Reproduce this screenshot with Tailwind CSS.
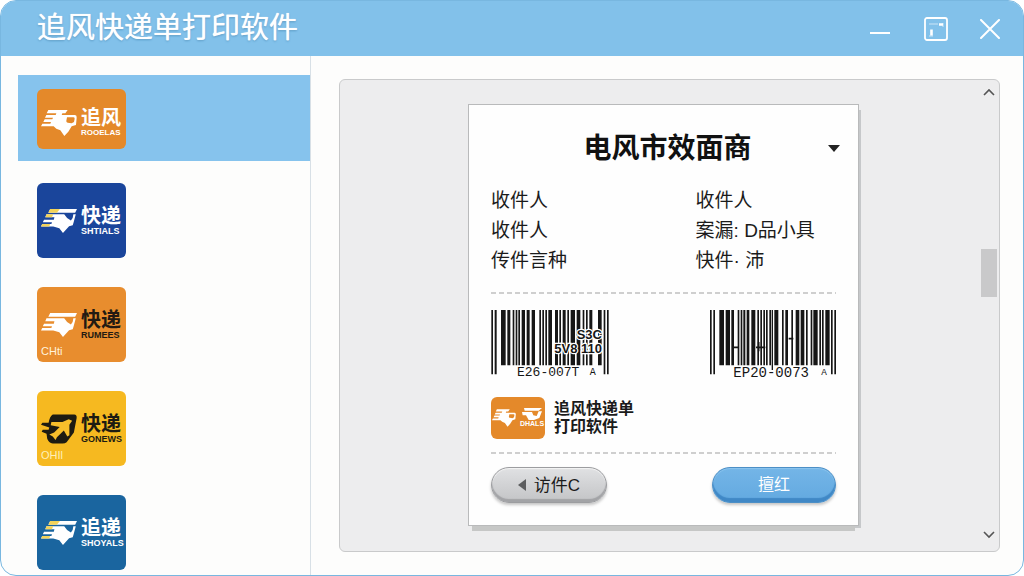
<!DOCTYPE html>
<html lang="zh-CN">
<head>
<meta charset="utf-8">
<meta name="viewport" content="width=device-width, initial-scale=1">
<title>追风快递单打印软件</title>
<script src="https://cdn.jsdelivr.net/npm/@tailwindcss/browser@4"></script>
</head>
<body class="bg-white font-['Liberation_Sans','Noto_Sans_CJK_SC',sans-serif] text-[#1b1b1b]">

<!-- Shared logo shapes -->
<svg class="hidden" aria-hidden="true">
  <symbol id="truck" viewBox="0 0 108 80">
    <path fill="currentColor" d="M22 1H80L73 11H64L62 16H102Q108 17 107 24L105 46L92 50L82 66L70 79L58 62L46 57L38 50H0L4 42H28L30 37H7L11 29H34L36 24H12L16 16H44L46 11H17Z"/>
    <path fill="#e4892a" d="M78 23H97Q101 23 101 27L99 37L92 41L80 39Q75 38 76 33Z"/>
  </symbol>
  <symbol id="eagle" viewBox="0 0 118 80">
    <path fill="currentColor" d="M30 1H118L112 13H24ZM18 18H76Q82 30 98 38Q106 30 106 18H114L107 44L104 54L92 57L72 79L60 64L46 60L40 58H0L4 50H34L36 44H6L10 36H42L44 28H14Z"/>
  </symbol>
  <symbol id="eagle-tips" viewBox="0 0 118 80">
    <path fill="#f3d35a" d="M30 1H62L52 13H24ZM18 18H40L36 28H14ZM4 50H30L27 58H0Z"/>
  </symbol>
  <symbol id="plane" viewBox="0 0 104 88">
    <path fill="#1d1b12" d="M34 2H96Q104 3 103 12L95 54L74 82Q70 86 62 86H34Q22 84 18 72L16 58L2 52L5 46H22L24 40L0 32L4 26H22Q25 8 34 2Z"/>
    <path fill="#f8bf2b" d="M30 24H62L80 16L90 20L82 32L82 62L76 66L66 48L46 68L42 76L34 66L24 60L38 54L54 38L28 33Z"/>
  </symbol>
</svg>

<div class="flex min-h-screen flex-col overflow-hidden rounded-2xl border border-[#78b7e0] bg-[#fdfdfc]">
  <header class="flex h-[55px] items-center justify-between bg-[#82c1ea] pr-[21px] pl-9">
    <h1 class="text-[29px] leading-none text-white [text-shadow:0_0_1px_#fff,0_1px_2px_#4f93c0]">追风快递单打印软件</h1>
    <div class="flex items-center gap-7 text-white">
      <button type="button" aria-label="最小化" class="grid size-7 place-items-center">
        <svg class="size-6" viewBox="0 0 24 24" fill="none" stroke="currentColor" stroke-width="2.2"><path d="M2 16H22"/></svg>
      </button>
      <button type="button" aria-label="最大化" class="grid size-7 place-items-center">
        <svg class="size-6" viewBox="0 0 24 24" fill="none" stroke="currentColor" stroke-width="1.8"><rect x="1" y="1" width="22" height="22" rx="2"/><path stroke-width="2.6" d="M7.500 12.500V18.500M15 7.500H19"/><path stroke-width="1" opacity=".6" d="M5 7H14M5 19H9M19 6V10"/></svg>
      </button>
      <button type="button" aria-label="关闭" class="grid size-6 place-items-center">
        <svg class="size-5" viewBox="0 0 20 20" fill="none" stroke="currentColor" stroke-width="2" stroke-linecap="round"><path d="M1 1L19 19M19 1L1 19"/></svg>
      </button>
    </div>
  </header>

  <main class="flex flex-1">
    <nav aria-label="快递公司" class="flex w-[310px] shrink-0 flex-col border-r border-[#d8e0e6] pt-[19px] pl-[17px]">
      <button type="button" aria-pressed="true" class="mb-[22px] flex h-[86px] items-center bg-[#86c3ed] pt-[2px] pl-[19px]">
        <span class="flex h-[60px] w-[89px] items-center gap-1 rounded-md bg-[#e4892a] pt-2 pl-1 text-white">
          <svg class="h-7 w-9 shrink-0" aria-hidden="true"><use href="#truck"/></svg>
          <span class="flex flex-col items-start text-xl leading-5 font-bold">追风<span class="text-[8px] leading-[10px]">ROOELAS</span></span>
        </span>
      </button>
      <div class="flex flex-col items-start gap-[29px] pb-1 pl-[19px]">
        <button type="button" class="flex h-[75px] w-[89px] items-center gap-1 rounded-md bg-[#1a459b] pl-1 text-white">
          <svg class="h-7 w-9 shrink-0" aria-hidden="true"><use href="#eagle"/><use href="#eagle-tips"/></svg>
          <span class="flex flex-col items-start text-xl leading-5 font-bold">快递<span class="text-[9px] leading-[10px]">SHTIALS</span></span>
        </button>
        <button type="button" class="relative flex h-[75px] w-[89px] items-center gap-1 rounded-md bg-[#e88d2e] pl-1 text-[#231a12]">
          <svg class="h-7 w-9 shrink-0 text-white" aria-hidden="true"><use href="#eagle"/></svg>
          <span class="flex flex-col items-start text-xl leading-5 font-bold">快递<span class="text-[9px] leading-[10px]">RUMEES</span></span>
          <span class="absolute bottom-[5px] left-1 text-[11px] leading-3 text-[#fff3dc]">CHti</span>
        </button>
        <button type="button" class="relative flex h-[75px] w-[89px] items-center gap-1 rounded-md bg-[#f6b920] pl-1 text-[#1d1b12]">
          <svg class="h-8 w-9 shrink-0" aria-hidden="true"><use href="#plane"/></svg>
          <span class="flex flex-col items-start text-xl leading-5 font-bold">快递<span class="text-[9px] leading-[10px]">GONEWS</span></span>
          <span class="absolute bottom-[5px] left-1 text-[11px] leading-3 text-[#fff0b8]">OHIl</span>
        </button>
        <button type="button" class="flex h-[75px] w-[89px] items-center gap-1 rounded-md bg-[#1a659f] pl-1 text-white">
          <svg class="h-7 w-9 shrink-0" aria-hidden="true"><use href="#eagle"/><use href="#eagle-tips"/></svg>
          <span class="flex flex-col items-start text-xl leading-5 font-bold">追递<span class="text-[9px] leading-[10px]">SHOYALS</span></span>
        </button>
      </div>
    </nav>

    <section aria-label="打印预览" class="mt-[23px] mr-[23px] mb-[23px] ml-7 flex flex-1 rounded-md border border-[#c9cacb] bg-[#ededee]">
      <div class="flex flex-1 items-start justify-center pt-6 pb-[23px] pl-2">
        <article class="w-[391px] border border-[#b9babb] bg-[#fefefe] px-[22px] pb-[22px] shadow-[0_9px_0_-4px_#c6c7c6,4px_4px_0_-2px_#c6c8ca]">
          <div class="relative mt-6 h-10">
            <select aria-label="面单模板" class="h-10 w-full appearance-none bg-transparent pl-2 text-center text-[28px] leading-10 font-bold text-[#111]">
              <option>电风市效面商</option>
            </select>
            <svg class="pointer-events-none absolute top-4 right-[-4px] h-[7px] w-3" viewBox="0 0 12 7" aria-hidden="true"><path d="M0 0H12L6 7Z" fill="#222"/></svg>
          </div>
          <div class="mt-[17px] grid grid-cols-[51fr_35fr] text-[19px] leading-[30px] whitespace-nowrap">
            <span>收件人</span><span>收件人</span>
            <span>收件人</span><span>案漏: D品小具</span>
            <span>传件言种</span><span>快件· 沛</span>
          </div>
          <svg class="mt-4 block h-[2px] w-full" aria-hidden="true"><line x1="0" y1="1" x2="100%" y2="1" stroke="#cfcfcf" stroke-width="2" stroke-dasharray="5 3"/></svg>

          <div class="mt-4 flex justify-between">
            <svg class="h-[72px] w-[118px]" viewBox="0 0 354 216" role="img" aria-label="条形码 E26-007T">
              <path fill="#161616" d="M1 0h5v193h-5zM11 0h6v193h-6zM30 0h14v166h-14zM49 0h9v166h-9zM65 0h5v166h-5zM74 0h5v166h-5zM82 0h5v166h-5zM92 0h10v166h-10zM107 0h9v166h-9zM122 0h10v166h-10zM145 0h5v166h-5zM154 0h5v166h-5zM163 0h5v166h-5zM172 0h11v166h-11zM192 0h9v166h-9zM205 0h5v166h-5zM215 0h9v166h-9zM229 0h5v166h-5zM239 0h13v166h-13zM257 0h11v166h-11zM275 0h5v166h-5zM285 0h5v166h-5zM295 0h9v166h-9zM321 0h11v166h-11zM338 0h5v193h-5zM348 0h5v193h-5z"/>
              <g fill="#161616" stroke="#fefefe" stroke-width="7" paint-order="stroke" font-family="Liberation Sans" font-weight="bold" font-size="39">
                <text x="257" y="88">S3C</text><text x="190" y="130">5V8 110</text>
              </g>
              <g fill="#161616" font-family="Liberation Mono" font-size="39"><text x="78" y="199">E26-007T</text><text x="296" y="194" font-size="30">A</text></g>
            </svg>
            <svg class="h-[72px] w-[126px]" viewBox="0 0 378 216" role="img" aria-label="条形码 EP20-0073">
              <path fill="#161616" d="M0 0h5v193h-5zM10 0h5v193h-5zM28 0h14v166h-14zM47 0h13v166h-13zM64 0h8v166h-8zM83 0h5v166h-5zM92 0h5v166h-5zM100 0h6v166h-6zM110 0h8v166h-8zM124 0h12v166h-12zM142 0h5v166h-5zM151 0h5v166h-5zM160 0h5v166h-5zM168 0h5v166h-5zM178 0h5v166h-5zM185 0h4v180h-4zM193 0h12v166h-12zM216 0h5v166h-5zM226 0h8v166h-8zM244 0h5v166h-5zM257 0h11v166h-11zM272 0h11v166h-11zM288 0h5v166h-5zM302 0h5v166h-5zM310 0h13v166h-13zM328 0h5v166h-5zM336 0h5v166h-5zM346 0h13v166h-13zM363 0h5v193h-5zM373 0h5v193h-5z"/>
              <path stroke="#161616" stroke-width="5" d="M72 112h14M138 112h28M236 86h14M146 96v28"/>
              <g fill="#161616" font-family="Liberation Mono" font-size="42"><text x="70" y="200">EP20-0073</text><text x="334" y="194" font-size="28">A</text></g>
            </svg>
          </div>

          <div class="mt-[15px] flex items-center gap-[9px]">
            <span class="flex h-[42px] w-[54px] items-center justify-center gap-1 rounded-md bg-[#e4892a] text-white">
              <svg class="h-[18px] w-6" aria-hidden="true"><use href="#truck"/></svg>
              <span class="flex flex-col items-center">
                <svg class="h-3 w-5" viewBox="0 0 60 36" fill="currentColor" aria-hidden="true"><path d="M6 0H60L50 8H8ZM0 12H30L34 22L44 24L50 10H60L52 30L36 36H20L12 22H2Z"/></svg>
                <span class="text-[7px] leading-[8px] font-bold">DHALS</span>
              </span>
            </span>
            <p class="text-base leading-[18px] font-bold">追风快递单<br>打印软件</p>
          </div>
          <svg class="mt-[13px] block h-[2px] w-full" aria-hidden="true"><line x1="0" y1="1" x2="100%" y2="1" stroke="#cfcfcf" stroke-width="2" stroke-dasharray="5 3"/></svg>

          <div class="mt-[13px] flex justify-between">
            <button type="button" class="flex h-9 w-[116px] items-center justify-center gap-2 rounded-full border border-[#9c9da0] bg-linear-to-b from-[#e0e1e3] to-[#c3c4c6] text-[17px] leading-none shadow-[inset_0_-3px_1px_#a2a3a6,inset_0_1px_1px_#f4f4f4,0_2px_3px_#c4c4c4]">
              <svg class="h-3 w-2" viewBox="0 0 8 12" aria-hidden="true"><path d="M8 0V12L0 6Z" fill="#5c5d5f"/></svg>
              <span>访件C</span>
            </button>
            <button type="button" class="h-9 w-[124px] rounded-full border border-[#4c8fc6] bg-linear-to-b from-[#74b5e7] to-[#62a9e0] text-base leading-none text-white shadow-[inset_0_-4px_1px_#4088c6,inset_0_1px_1px_#8cc5ef,0_2px_3px_#c4c4c4]">擅红</button>
          </div>
        </article>
      </div>

      <div class="flex w-5 flex-col items-center py-1">
        <button type="button" aria-label="向上滚动" class="grid h-4 w-4 place-items-center">
          <svg class="h-2 w-3" viewBox="0 0 12 8" fill="none" stroke="#555" stroke-width="1.6"><path d="M1 7L6 2L11 7"/></svg>
        </button>
        <div class="grow-[39]"></div>
        <div class="h-12 w-4 bg-[#c9c9ca]"></div>
        <div class="grow-[60]"></div>
        <button type="button" aria-label="向下滚动" class="mb-1 grid h-4 w-4 place-items-center">
          <svg class="h-2 w-3" viewBox="0 0 12 8" fill="none" stroke="#555" stroke-width="1.6"><path d="M1 1L6 6L11 1"/></svg>
        </button>
      </div>
    </section>
  </main>
</div>
</body>
</html>
